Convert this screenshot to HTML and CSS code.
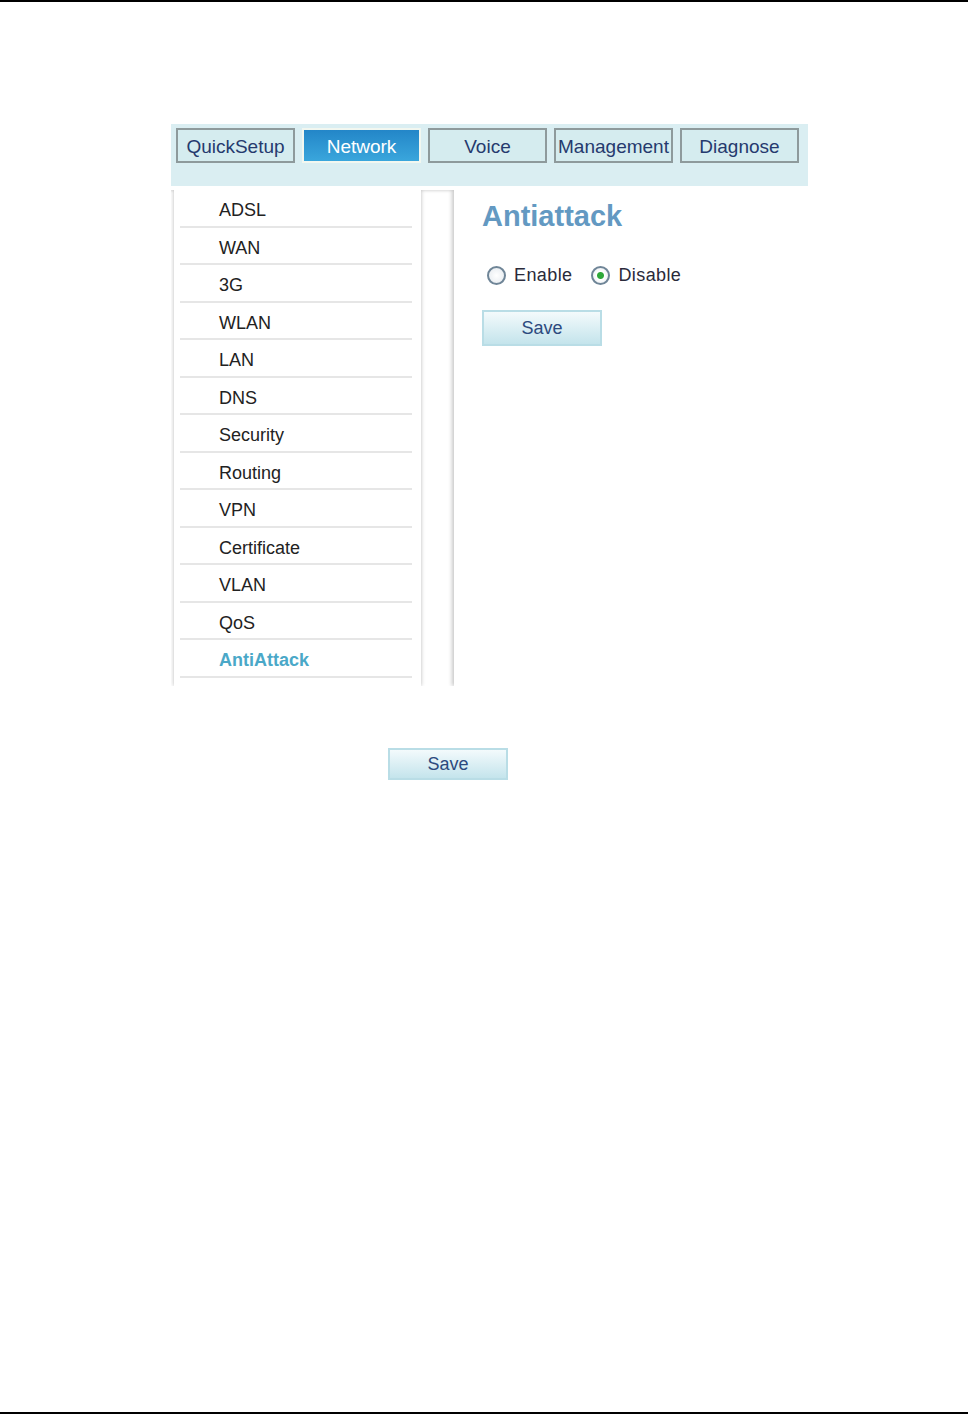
FILE: index.html
```html
<!DOCTYPE html>
<html lang="en">
<head>
  <meta charset="UTF-8">
  <title>Antiattack</title>
  <link rel="stylesheet" href="styles.css">
</head>
<body>
  <div class="page">
    <div class="frame">
      <div class="tabs">
        <div class="tab">QuickSetup</div>
        <div class="tab active">Network</div>
        <div class="tab">Voice</div>
        <div class="tab">Management</div>
        <div class="tab">Diagnose</div>
      </div>

      <div class="panels">
        <ul class="menu">
          <li>ADSL</li>
          <li>WAN</li>
          <li>3G</li>
          <li>WLAN</li>
          <li>LAN</li>
          <li>DNS</li>
          <li>Security</li>
          <li>Routing</li>
          <li>VPN</li>
          <li>Certificate</li>
          <li>VLAN</li>
          <li>QoS</li>
          <li class="current">AntiAttack</li>
        </ul>

        <div class="content">
          <h1>Antiattack</h1>
          <div class="radios">
            <label><input type="radio" name="anti"> Enable</label>
            <label><input type="radio" name="anti" checked> Disable</label>
          </div>
          <button class="btn">Save</button>
        </div>
      </div>

      <button class="btn btn-bottom">Save</button>
    </div>
  </div>
</body>
</html>
```

FILE: styles.css
```css
body {
  margin: 0;
  font-family: "Liberation Sans", Arial, sans-serif;
  background: #fff;
}
.page {
  box-sizing: border-box;
  height: 1414px;
  border-top: 2px solid #000;
  border-bottom: 2px solid #000;
  overflow: hidden;
}
.frame {
  width: 637px;
  margin: 122px 0 0 171px;
}
.tabs {
  display: flex;
  gap: 7px;
  height: 62px;
  padding: 4px 5px 0;
  box-sizing: border-box;
  background: #daeef2;
}
.tab {
  flex: none;
  box-sizing: border-box;
  width: 119px;
  height: 35px;
  border: 2px solid #8e9a9c;
  background: #d5ecef;
  color: #253a6e;
  font-size: 19px;
  line-height: 34px;
  text-align: center;
}
.tab.active {
  border: 2px solid #f2f7f0;
  background: linear-gradient(#2386c8, #3aa6dc);
  color: #fff;
}
.panels {
  display: flex;
  height: 496px;
  margin-top: 4px;
  padding: 0 0 0 3px;
  overflow: hidden;
  box-shadow: inset 0 3px 3px -2px #d8d8d8;
}
.menu {
  list-style: none;
  width: 247px;
  margin: 0;
  padding: 0 9px 0 6px;
  box-sizing: border-box;
  background: #fff;
  box-shadow: 0 0 4px rgba(0, 0, 0, 0.28);
}
.menu li {
  height: 35.5px;
  padding-left: 39px;
  border-bottom: 2px solid #e6e6e6;
  color: #222;
  font-size: 18px;
  line-height: 41px;
}
.menu li.current {
  color: #4aa8c8;
  font-weight: bold;
}
.content {
  flex: 1;
  margin-left: 33px;
  padding: 8px 0 0 28px;
  background: #fff;
  box-shadow: -2px 0 4px rgba(0, 0, 0, 0.22);
}
h1 {
  margin: 0;
  font-size: 29px;
  color: #6399c2;
  line-height: 36px;
}
.radios {
  display: flex;
  gap: 14px;
  margin-top: 31px;
  color: #2a2a3a;
  font-size: 18px;
  letter-spacing: 0.4px;
}
.radios label {
  display: flex;
  align-items: center;
  gap: 8px;
}
.radios input {
  appearance: none;
  width: 19px;
  height: 19px;
  margin: 0 0 0 5px;
  border: 2px solid #6f8597;
  border-radius: 50%;
  background: radial-gradient(#fff, #e4e9ee);
  box-sizing: border-box;
}
.radios input:checked {
  background: radial-gradient(circle, #2fa83a 0 3px, #fff 4px, #e4e9ee);
}
.btn {
  display: block;
  width: 120px;
  height: 36px;
  margin-top: 24px;
  border: 2px solid #b9dde6;
  background: linear-gradient(#f3fafc, #c4e4ec);
  color: #2c4a7e;
  font-family: "Liberation Sans", Arial, sans-serif;
  font-size: 18px;
  padding: 0;
}
.btn-bottom {
  height: 32px;
  margin: 62px 0 0 217px;
}
```
